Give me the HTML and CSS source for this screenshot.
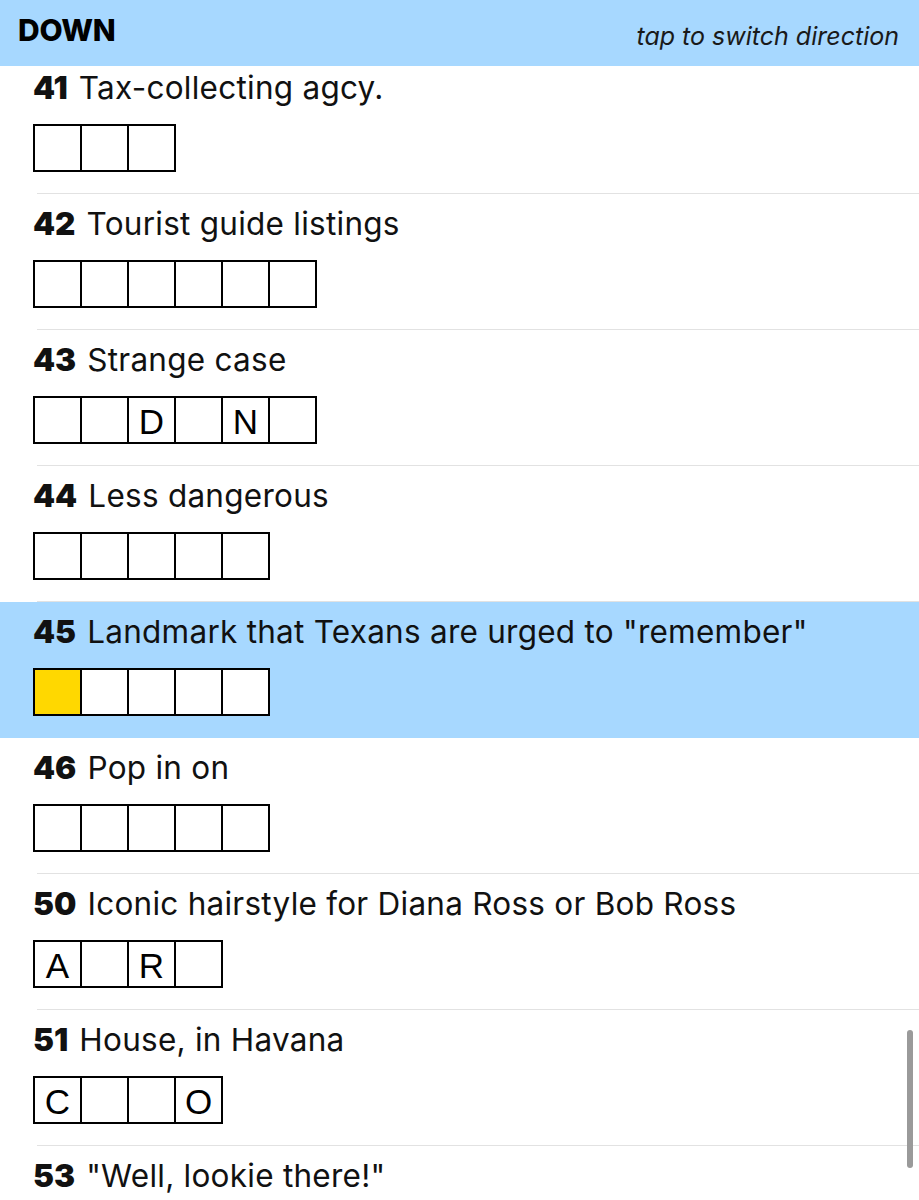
FILE: index.html
```html
<!DOCTYPE html>
<html>
<head>
  <title>Clues - Down</title>
  <link rel="stylesheet" href="styles.css">
</head>
<body>
  <div class="clue-panel">
    <div class="direction-bar">
      <span class="direction-name">DOWN</span>
      <span class="direction-hint">tap to switch direction</span>
    </div>

    <div class="clue-list">
      <div class="clue">
        <div class="clue-text"><span class="clue-num">41</span> Tax-collecting agcy.</div>
        <div class="cells">
          <span class="cell"></span><span class="cell"></span><span class="cell"></span>
        </div>
      </div>

      <div class="clue">
        <div class="clue-text"><span class="clue-num">42</span> Tourist guide listings</div>
        <div class="cells">
          <span class="cell"></span><span class="cell"></span><span class="cell"></span>
          <span class="cell"></span><span class="cell"></span><span class="cell"></span>
        </div>
      </div>

      <div class="clue">
        <div class="clue-text"><span class="clue-num">43</span> Strange case</div>
        <div class="cells">
          <span class="cell"></span><span class="cell"></span><span class="cell">D</span>
          <span class="cell"></span><span class="cell">N</span><span class="cell"></span>
        </div>
      </div>

      <div class="clue">
        <div class="clue-text"><span class="clue-num">44</span> Less dangerous</div>
        <div class="cells">
          <span class="cell"></span><span class="cell"></span><span class="cell"></span>
          <span class="cell"></span><span class="cell"></span>
        </div>
      </div>

      <div class="clue active">
        <div class="clue-text"><span class="clue-num">45</span> Landmark that Texans are urged to "remember"</div>
        <div class="cells">
          <span class="cell current"></span><span class="cell"></span><span class="cell"></span>
          <span class="cell"></span><span class="cell"></span>
        </div>
      </div>

      <div class="clue">
        <div class="clue-text"><span class="clue-num">46</span> Pop in on</div>
        <div class="cells">
          <span class="cell"></span><span class="cell"></span><span class="cell"></span>
          <span class="cell"></span><span class="cell"></span>
        </div>
      </div>

      <div class="clue">
        <div class="clue-text"><span class="clue-num">50</span> Iconic hairstyle for Diana Ross or Bob Ross</div>
        <div class="cells">
          <span class="cell">A</span><span class="cell"></span><span class="cell">R</span><span class="cell"></span>
        </div>
      </div>

      <div class="clue">
        <div class="clue-text"><span class="clue-num">51</span> House, in Havana</div>
        <div class="cells">
          <span class="cell">C</span><span class="cell"></span><span class="cell"></span><span class="cell">O</span>
        </div>
      </div>

      <div class="clue">
        <div class="clue-text"><span class="clue-num">53</span> "Well, lookie there!"</div>
        <div class="cells">
          <span class="cell"></span><span class="cell"></span><span class="cell"></span>
          <span class="cell"></span><span class="cell"></span>
        </div>
      </div>
    </div>

    <div class="scroll-thumb"></div>
  </div>
</body>
</html>
```
FILE: styles.css
```css
:root {
  --bar-blue: #a7d8ff;
  --cell-yellow: #ffd800;
  --ink: #111111;
  --rule: #e2e2e2;
}

body {
  margin: 0;
  background: #ffffff;
  color: var(--ink);
  font-family: "Inter", "Noto Sans", sans-serif;
}

.clue-panel {
  position: relative; /* for the scroll thumb */
  height: 1200px;
  overflow: hidden;
}

/* Header bar */
.direction-bar {
  height: 66px;
  background: var(--bar-blue);
  display: flex;
  align-items: center;
  justify-content: space-between;
  padding: 0 20px 0 18px;
}
.direction-name {
  font-weight: 800;
  font-size: 30px;
  letter-spacing: -0.3px;
  color: #000;
  margin-top: -6px;
}
.direction-hint {
  font-style: italic;
  font-size: 25px;
  color: #1a1a1a;
  margin-top: 6px;
}

/* Clue rows */
.clue {
  padding: 12px 0 0 33px;
}
.clue:first-child {
  padding-top: 4px;
}
.clue::after { /* thin separator under each row */
  content: "";
  display: block;
  height: 1px;
  margin: 21px 0 0 4px;
  background: var(--rule);
}
.clue.active {
  background: var(--bar-blue);
}
.clue.active::after {
  background: transparent;
}

.clue-text {
  font-size: 31.5px;
  line-height: 36px;
  letter-spacing: 0.25px;
  white-space: nowrap;
}
.clue-num {
  font-weight: 900;
  letter-spacing: 0;
  margin-right: 2px;
}

.cells {
  display: flex;
  margin-top: 18px;
}
.cell {
  width: 45px;
  height: 40px;
  padding-top: 4px;
  border: 2px solid #000;
  margin-left: -2px;
  background: #ffffff;
  display: flex;
  align-items: center;
  justify-content: center;
  font-family: "Liberation Sans", Arial, sans-serif;
  font-size: 35px;
  color: #000;
}
.cell:first-child {
  margin-left: 0;
}
.cell.current {
  background: var(--cell-yellow);
}

.scroll-thumb {
  position: absolute;
  right: 6px;
  top: 1030px;
  width: 6px;
  height: 138px;
  border-radius: 3px;
  background: #9a9a9a;
}
```
